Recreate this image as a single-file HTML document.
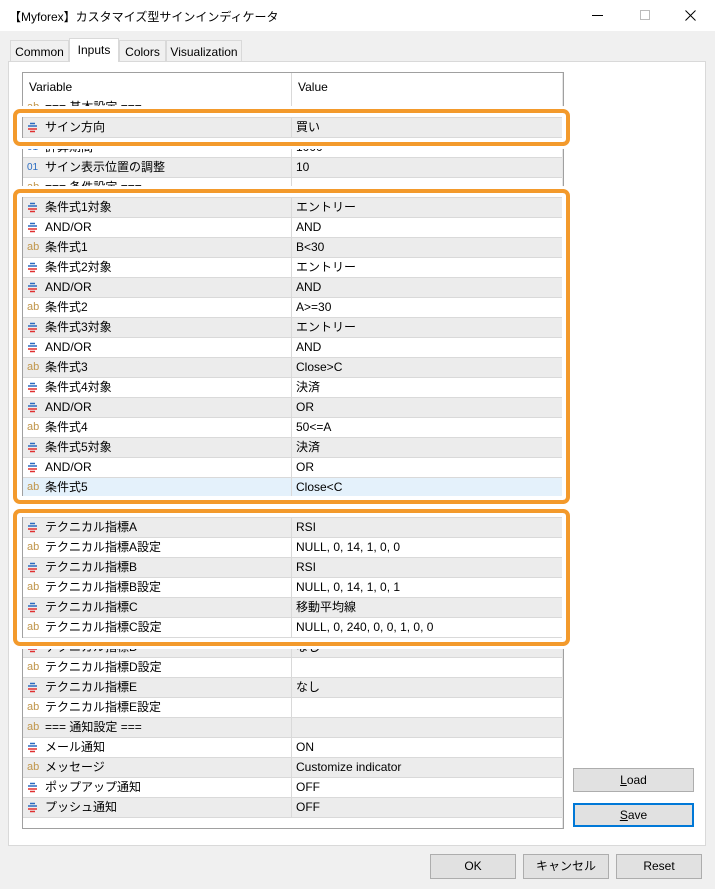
<!DOCTYPE html>
<html><head><meta charset="utf-8"><style>
*{box-sizing:border-box;margin:0;padding:0}
body{width:715px;height:889px;background:#f0f0f0;font-family:"Liberation Sans","Noto Sans CJK JP",sans-serif;font-size:12px;color:#000;position:relative;overflow:hidden}
.abs{position:absolute}
#title{left:0;top:0;width:715px;height:31px;background:#fff}
.tab{position:absolute;top:40px;height:21px;border:1px solid #d9d9d9;border-bottom:none;background:#f0f0f0;padding:4px 0 0 0;text-align:center;font-size:12px}
#panel{left:8px;top:61px;width:698px;height:785px;background:#fff;border:1px solid #d9d9d9}
#tbl{left:22px;top:72px;width:542px;height:757px;border:1px solid #a0a0a0;background:#fff;overflow:hidden}
.row{position:absolute;left:0;width:540px;height:20px;border-bottom:1px solid #d9d9d9;line-height:19px}
.row.g{background:#ececec}
.row.s{background:#e4f1fb}
.v{position:absolute;left:22px;top:0;white-space:nowrap}
.val{position:absolute;left:268px;top:0;border-left:1px solid #d9d9d9;padding-left:4px;height:19px;width:272px;white-space:nowrap}
.ic{position:absolute;left:4px;top:0;font-size:11px}
.ab{color:#c0954a}
.n1{color:#2b6cc0;font-size:10px}
.en{position:absolute;left:4px;top:4px;width:11px;height:11px}
.box{position:absolute;border:4px solid #f39a2c;border-radius:7px;box-shadow:inset 0 0 0 4px #fff,0 0 0 3px #fff}
.btn{position:absolute;background:#e1e1e1;border:1px solid #adadad;text-align:center;line-height:22px;font-size:12px}
</style></head><body>
<div id="title" class="abs"><div class="abs" style="left:9px;top:8px;font-size:12px">【Myforex】カスタマイズ型サインインディケータ</div>
<div class="abs" style="left:592px;top:15px;width:11px;height:1px;background:#000"></div>
<div class="abs" style="left:640px;top:10px;width:10px;height:10px;border:1px solid #bbb"></div>
<svg class="abs" style="left:685px;top:10px" width="11" height="11" viewBox="0 0 11 11"><path d="M0.5 0.5L10.5 10.5M10.5 0.5L0.5 10.5" stroke="#000" stroke-width="1"/></svg>
</div>
<div id="panel" class="abs"></div>
<div class="tab" style="left:10px;width:59px">Common</div>
<div class="tab" style="left:69px;width:50px;top:38px;height:24px;background:#fff;z-index:2">Inputs</div>
<div class="tab" style="left:119px;width:47px">Colors</div>
<div class="tab" style="left:166px;width:76px">Visualization</div>
<div id="tbl" class="abs">
<div class="abs" style="left:0;top:0;width:540px;height:25px;background:#fff"><div class="abs" style="left:6px;top:7px">Variable</div><div class="abs" style="left:268px;top:0;height:25px;border-left:1px solid #d9d9d9;padding:7px 0 0 6px">Value</div></div>
<div id="rows"></div>
<div class="abs" style="left:539px;top:0;width:1px;height:760px;background:#e5e5e5"></div>
</div>
<div class="box" style="left:13px;top:109px;width:557px;height:37px"></div>
<div class="box" style="left:13px;top:189px;width:557px;height:315px"></div>
<div class="box" style="left:13px;top:509px;width:557px;height:137px"></div>
<div class="btn" style="left:573px;top:768px;width:121px;height:24px"><u>L</u>oad</div>
<div class="btn" style="left:573px;top:803px;width:121px;height:24px;border:2px solid #0078d7;line-height:20px"><u>S</u>ave</div>
<div class="btn" style="left:430px;top:854px;width:86px;height:25px">OK</div>
<div class="btn" style="left:523px;top:854px;width:86px;height:25px">キャンセル</div>
<div class="btn" style="left:616px;top:854px;width:86px;height:25px">Reset</div>
<script>
var R=[["ab","=== 基本設定 ===",""],["e","サイン方向","買い"],["1","計算期間","1000"],["1","サイン表示位置の調整","10"],["ab","=== 条件設定 ===",""],
["e","条件式1対象","エントリー"],["e","AND/OR","AND"],["ab","条件式1","B<30"],["e","条件式2対象","エントリー"],["e","AND/OR","AND"],["ab","条件式2","A>=30"],
["e","条件式3対象","エントリー"],["e","AND/OR","AND"],["ab","条件式3","Close>C"],["e","条件式4対象","決済"],["e","AND/OR","OR"],["ab","条件式4","50<=A"],
["e","条件式5対象","決済"],["e","AND/OR","OR"],["ab","条件式5","Close<C"],["ab","=== 指標設定 ===",""],
["e","テクニカル指標A","RSI"],["ab","テクニカル指標A設定","NULL, 0, 14, 1, 0, 0"],["e","テクニカル指標B","RSI"],["ab","テクニカル指標B設定","NULL, 0, 14, 1, 0, 1"],
["e","テクニカル指標C","移動平均線"],["ab","テクニカル指標C設定","NULL, 0, 240, 0, 0, 1, 0, 0"],["e","テクニカル指標D","なし"],["ab","テクニカル指標D設定",""],
["e","テクニカル指標E","なし"],["ab","テクニカル指標E設定",""],["ab","=== 通知設定 ===",""],["e","メール通知","ON"],["ab","メッセージ","Customize indicator"],
["e","ポップアップ通知","OFF"],["e","プッシュ通知","OFF"]];
var h="";
var en='<svg class="en" viewBox="0 0 11 11"><path d="M3 1.5H8M1 4H10" stroke="#2b6cc0" stroke-width="1.4"/><path d="M1 7H10M3 9.5H8" stroke="#e03030" stroke-width="1.4"/></svg>';
var esc=function(s){return s.replace(/&/g,"&amp;").replace(/</g,"&lt;").replace(/>/g,"&gt;")};
R.forEach(function(r,i){var c=i==19?"s":(i%2?"g":"");var ic=r[0]=="e"?en:(r[0]=="ab"?'<span class="ic ab">ab</span>':'<span class="ic n1">01</span>');
h+='<div class="row '+c+'" style="top:'+(25+20*i)+'px">'+ic+'<span class="v">'+esc(r[1])+'</span><span class="val">'+esc(r[2])+'</span></div>';});
document.getElementById("rows").innerHTML=h;
</script>
</body></html>
